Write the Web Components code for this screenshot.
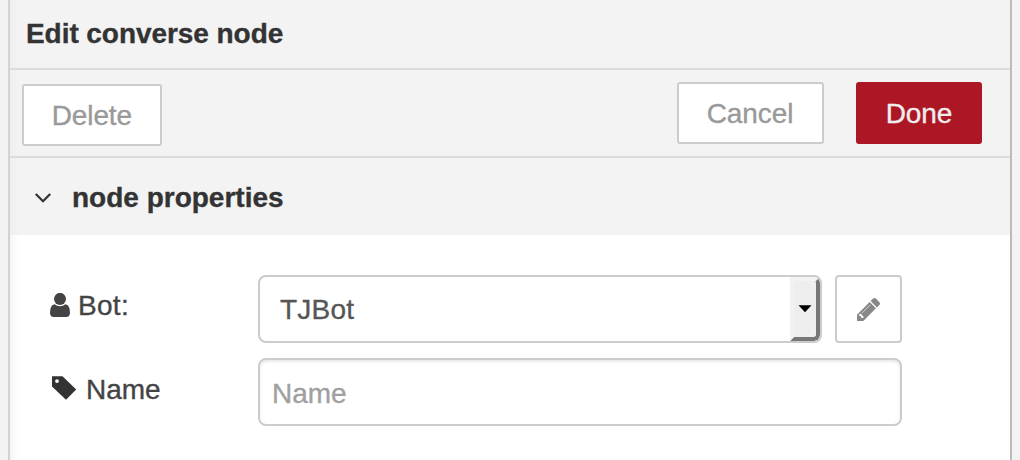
<!DOCTYPE html>
<html lang="en">
<head>
<meta charset="utf-8">
<title>Edit converse node</title>
<style>
html,body{margin:0;height:100%;overflow:hidden}
body{background:#f3f3f3;font:28px/36px "Liberation Sans",Arial,sans-serif;color:#444;-webkit-text-stroke:.35px}
</style>
</head>
<body>
<edit-tray>
  <tray-title slot="title">Edit converse node</tray-title>
  <tray-toolbar slot="toolbar">
    <tray-button class="delete">Delete</tray-button>
    <tray-button slot="end">Cancel</tray-button>
    <tray-button slot="end" primary>Done</tray-button>
  </tray-toolbar>
  <section-header slot="section">node properties</section-header>
  <form-row>
    <field-label slot="label" icon="user">Bot:</field-label>
    <select-box>TJBot</select-box>
    <edit-button></edit-button>
  </form-row>
  <form-row>
    <field-label slot="label" icon="tag">Name</field-label>
    <text-field>Name</text-field>
  </form-row>
</edit-tray>
<script>
const define = (name, html, setup) => customElements.define(name, class extends HTMLElement {
  constructor() {
    super();
    this.attachShadow({mode: "open"}).innerHTML = "<style>*{box-sizing:border-box}:host{box-sizing:border-box}</style>" + html;
  }
  connectedCallback() { if (setup) setup(this); }
});

define("edit-tray", `<style>
:host{display:flex;flex-direction:column;width:1004px;height:460px;margin-left:8px;border-left:2px solid #d3d3d3;border-right:2px solid #bbb;background:#fff;background-image:linear-gradient(90deg,rgba(0,0,0,.035),transparent 9px)}
.form{padding:40px 0 0 40px;display:flex;flex-direction:column;gap:15px}
</style><slot name="title"></slot><slot name="toolbar"></slot><slot name="section"></slot><div class="form"><slot></slot></div>`);

define("tray-title", `<style>
:host{display:block;height:70px;padding:16px 0 0 16px;border-bottom:2px solid #dcdcdc;background:linear-gradient(90deg,#eee,#f3f3f3 9px);color:#333;font-weight:bold;letter-spacing:-.06px}
</style><slot></slot>`);

define("tray-toolbar", `<style>
:host{display:flex;justify-content:space-between;align-items:flex-start;height:88px;padding:12px 28px 0 12px;border-bottom:2px solid #dcdcdc;background:linear-gradient(90deg,#eee,#f3f3f3 9px)}
.start{padding-top:2px}.end{display:flex;gap:32px}
</style><div class="start"><slot></slot></div><div class="end"><slot name="end"></slot></div>`);

define("tray-button", `<style>
:host{display:block;height:62px;padding:12px 0 0 27.700px;border:2px solid #ccc;border-radius:3px;background:#fff;color:#999;width:147px;white-space:nowrap;letter-spacing:-.1px}
:host(.delete){width:140px}
:host([primary]){width:126px;background:#ad1625;border-color:#ad1625;color:#eee}
</style><slot></slot>`);

define("section-header", `<style>
:host{display:flex;align-items:flex-start;height:77px;padding:22px 0 0 24px;background:linear-gradient(90deg,#eee,#f3f3f3 9px);color:#333;font-weight:bold}
svg{width:18px;height:12px;margin:12px 20px 0 0}
</style><svg viewBox="0 0 18 12"><path d="M1.800 2 9 9.200l7.200-7.200" fill="none" stroke="#333" stroke-width="2.300"/></svg><slot></slot>`);

define("form-row", `<style>
:host{display:flex}.label{width:208px}.controls{display:flex;gap:13px}
</style><div class="label"><slot name="label"></slot></div><div class="controls"><slot></slot></div>`);

const icons = {
  user: `<svg width="20" height="24" viewBox="0 0 20 24" style="margin:5px 8px 0 0"><path fill="#444" d="M4.600 11.300Q0 12 0 19.800 0 24 4 24h12q4 0 4-4.200 0-7.800-4.600-8.500-2.200 2-5.400 2t-5.400-2Z"/><circle cx="10" cy="5.900" r="6" fill="#444"/></svg>`,
  tag: `<svg width="26" height="26" viewBox="0 0 26 26" style="margin:3px 9px 0 1px;filter:blur(.5px)"><path fill="#333" fill-rule="evenodd" d="M1 1.200h10.500L25.200 14.600 15 24.800 1 11.600ZM6 4.200a1.900 1.900 0 1 0 0 3.800 1.900 1.900 0 0 0 0-3.800Z"/></svg>`
};
define("field-label", `<style>:host{display:flex;align-items:flex-start;padding-top:13px}:host([icon=user]){letter-spacing:.3px}:host([icon=tag]){padding-top:14px}</style><span class="icon" style="display:flex"></span><slot></slot>`,
  el => { el.shadowRoot.querySelector(".icon").innerHTML = icons[el.getAttribute("icon")]; });

define("select-box", `<style>
:host{display:flex;width:564px;height:68px;border:2px solid #ccc;border-radius:8px;background:#fff;color:#555;overflow:hidden}
.value{flex:1;padding:15px 0 0 20px;letter-spacing:.2px}
.arrow{width:30px;height:64px;background:#eee;border:4px solid;border-color:#f2f2f2 #777 #777 #f2f2f2;border-radius:0 6px 6px 0;display:flex;justify-content:center}
svg{display:block;flex:none;width:14px;height:8px;margin:24px 0 0 0}
</style><div class="value"><slot></slot></div><div class="arrow"><svg viewBox="0 0 14 8"><path d="M.500.300h13L7 7.300Z"/></svg></div>`);

define("edit-button", `<style>
:host{display:block;padding:21px 0 0 20px;width:67px;height:68px;border:2px solid #ccc;border-radius:4px;background:#fff}
svg{display:block}
</style><svg width="23" height="23" viewBox="0 0 1515 1515"><path fill="#888" transform="translate(0 1387) scale(1 -1)" d="M363 0l91 -91l-235 -235l-91 91v107h128v128h107zM832 1120l416 -416l-832 -832h-416v416zM1515 1024q0 -53 -37 -90l-166 -166l-416 416l166 165q36 38 90 38q53 0 91 -38l235 -234q37 -39 37 -91z"/><path fill="#fff" d="M363 1387l-107-70v-70l-128-50v-45l91-91 235 235Z" transform="translate(0 -45)"/><path fill="none" stroke="#ddd" stroke-width="55" stroke-linecap="round" d="M850 473 335 988"/></svg>`);

define("text-field", `<style>
:host{display:block;width:644px;height:68px;padding:16px 12px;border:2px solid #ccc;border-radius:8px;background:#fff;box-shadow:inset 0 2px 3px rgba(0,0,0,.09);color:#a0a0a0}
</style><slot></slot>`);
</script>
</body>
</html>
